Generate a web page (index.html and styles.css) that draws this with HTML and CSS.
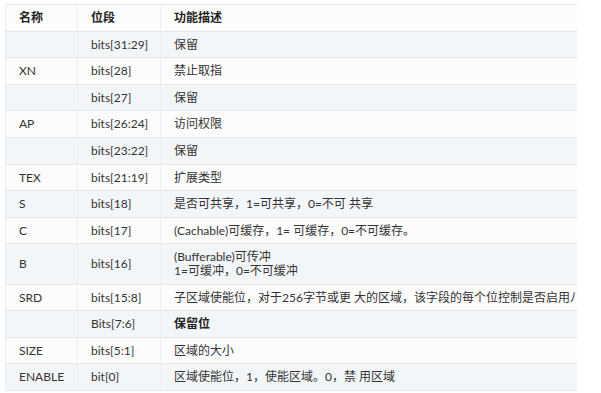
FILE: index.html
```html
<!DOCTYPE html>
<html lang="zh-CN">
<head>
    <meta charset="UTF-8">
    <meta name="viewport" content="width=device-width, initial-scale=1.0">
    <title>MPU RASR</title>
    <link rel="stylesheet" href="styles.css">
</head>
<body>
    <div class="table-wrap">
        <table class="reg-table">
            <colgroup>
                <col class="col-name">
                <col class="col-bits">
                <col class="col-desc">
            </colgroup>
            <thead>
                <tr>
                    <th>名称</th>
                    <th>位段</th>
                    <th>功能描述</th>
                </tr>
            </thead>
            <tbody>
                <tr><td></td><td>bits[31:29]</td><td>保留</td></tr>
                <tr><td>XN</td><td>bits[28]</td><td>禁止取指</td></tr>
                <tr><td></td><td>bits[27]</td><td>保留</td></tr>
                <tr><td>AP</td><td>bits[26:24]</td><td>访问权限</td></tr>
                <tr><td></td><td>bits[23:22]</td><td>保留</td></tr>
                <tr><td>TEX</td><td>bits[21:19]</td><td>扩展类型</td></tr>
                <tr><td>S</td><td>bits[18]</td><td>是否可共享，1=可共享，0=不可 共享</td></tr>
                <tr><td>C</td><td>bits[17]</td><td>(Cachable)可缓存，1= 可缓存，0=不可缓存。</td></tr>
                <tr><td>B</td><td>bits[16]</td><td>(Bufferable)可传冲<br>1=可缓冲，0=不可缓冲</td></tr>
                <tr><td>SRD</td><td>bits[15:8]</td><td>子区域使能位，对于256字节或更 大的区域，该字段的每个位控制是否启用八个子区域</td></tr>
                <tr><td></td><td>Bits[7:6]</td><td><strong>保留位</strong></td></tr>
                <tr><td>SIZE</td><td>bits[5:1]</td><td>区域的大小</td></tr>
                <tr><td>ENABLE</td><td>bit[0]</td><td>区域使能位，1，使能区域。0，禁 用区域</td></tr>
            </tbody>
        </table>
    </div>
</body>
</html>
```

FILE: styles.css
```css
body {
    margin: 0;
    background: #ffffff;
    font-family: Lato, "Noto Sans CJK SC", sans-serif;
    font-size: 12px;
    color: #333;
}
.table-wrap {
    margin-top: 4px;
    margin-left: 5px;
    width: 572px;
    overflow: hidden;
}
.reg-table {
    border-collapse: collapse;
    table-layout: fixed;
    width: 860px;
    background: #fcfcfc;
    white-space: nowrap;
}
.col-name {
    width: 72px;
}
.col-bits {
    width: 83px;
}
.reg-table th,
.reg-table td {
    text-align: left;
    padding: 6px 13px 6px 13px;
    line-height: 13.6px;
    border-top: 1px solid #e6e9eb;
    border-bottom: 1px solid #e6e9eb;
    border-left: 1px solid #eceef0;
}
.reg-table th {
    font-weight: bold;
    color: #222;
    background: #fcfcfc;
}
.reg-table tbody tr:nth-child(odd) td {
    background: #f3f6f8;
}
.reg-table strong {
    color: #222;
}
```
